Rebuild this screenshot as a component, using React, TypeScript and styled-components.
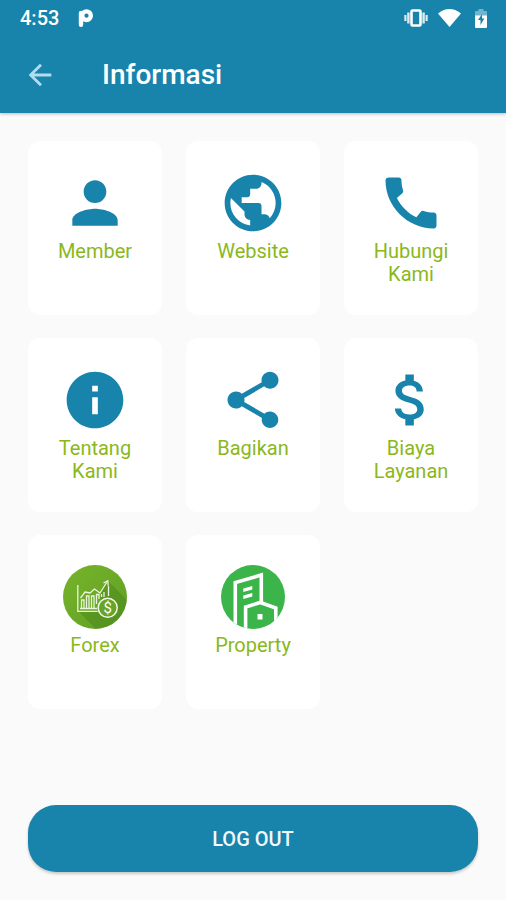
import React from "react";
import styled, { createGlobalStyle } from "styled-components";
import {
  MdArrowBack,
  MdAttachMoney,
  MdCall,
  MdInfo,
  MdPerson,
  MdShare,
} from "react-icons/md";

const blue = "#1883ab";
const lime = "#8ab81c";

const GlobalStyle = createGlobalStyle`
  *, *::before, *::after { box-sizing: border-box; }
  body {
    margin: 0;
    background: #fafafa;
    font-family: Roboto, "Noto Sans", sans-serif;
  }
`;

const Screen = styled.div`
  display: flex;
  flex-direction: column;
  min-height: 100vh;
`;

const Header = styled.header`
  background: ${blue};
  color: #fff;
  box-shadow: 0 1px 3px rgba(0, 0, 0, 0.25);
`;

const StatusBar = styled.div`
  display: flex;
  align-items: center;
  justify-content: space-between;
  height: 36px;
  padding: 0 19px 0 20px;
`;

const StatusGroup = styled.div<{ $gap: number }>`
  display: flex;
  align-items: center;
  gap: ${(p) => p.$gap}px;

  svg {
    display: block;
  }
`;

const Clock = styled.time`
  font-size: 20px;
  font-weight: 500;
  line-height: 24px;
`;

const Toolbar = styled.div`
  display: flex;
  align-items: center;
  gap: 45px;
  height: 77px;
  padding: 0 23px;
`;

const BackButton = styled.button`
  display: flex;
  padding: 0;
  border: 0;
  background: none;
  color: #b4dcf0;
  cursor: pointer;
`;

const Title = styled.h1`
  margin: 0;
  font-size: 28px;
  font-weight: 500;
  line-height: 32px;
`;

const Content = styled.main`
  display: flex;
  flex: 1;
  flex-direction: column;
  justify-content: space-between;
  gap: 28px;
  padding: 28px;
`;

const Menu = styled.nav`
  display: grid;
  grid-template-columns: repeat(3, 1fr);
  grid-auto-rows: minmax(174px, auto);
  gap: 23px 24px;
`;

const Tile = styled.a`
  display: flex;
  flex-direction: column;
  align-items: center;
  gap: 3px;
  padding: 28px 24px 24px;
  border-radius: 12px;
  background: #fff;
  color: ${blue};
  text-decoration: none;
`;

const TileLabel = styled.span`
  color: ${lime};
  font-size: 20px;
  line-height: 23px;
  text-align: center;
`;

const LogoutButton = styled.button`
  width: 100%;
  height: 67px;
  border: 0;
  border-radius: 28px;
  background: ${blue};
  color: #f0faff;
  box-shadow: 0 2px 3px rgba(0, 0, 0, 0.2);
  font: 500 20px/24px Roboto, "Noto Sans", sans-serif;
  cursor: pointer;
`;

const NotificationIcon = () => (
  <svg width="16" height="18" viewBox="0 0 16 18" aria-hidden="true">
    <circle cx="8.500" cy="6.700" r="4.300" fill="none" stroke="#fff" strokeWidth="4.400" />
    <path d="M3 4v11.700" stroke="#fff" strokeWidth="4.400" strokeLinecap="round" />
  </svg>
);

const VibrateIcon = () => (
  <svg width="24" height="18" viewBox="0 0 24 18" aria-hidden="true">
    <rect x="7.5" y="1.5" width="9" height="15" rx="1" fill="none" stroke="#fff" strokeWidth="2.6" />
    <path d="M4.4 3.5v11M19.6 3.5v11" stroke="#fff" strokeWidth="2.4" opacity="0.85" />
    <path d="M1.4 6v6M22.6 6v6" stroke="#fff" strokeWidth="2.2" opacity="0.85" />
  </svg>
);

const WifiIcon = () => (
  <svg width="23" height="18" viewBox="0 0 23 18" aria-hidden="true">
    <path d="M0 4.5Q11.5-4.3 23 4.5L11.5 18z" fill="#fff" />
  </svg>
);

const BatteryIcon = () => (
  <svg width="16" height="19" viewBox="-4 0 16 19" aria-hidden="true">
    <path d="M3.5 0h5v2H11a1 1 0 0 1 1 1v4H0V3a1 1 0 0 1 1-1h2.500z" fill="#fff" opacity="0.4" />
    <path d="M0 6.500h12V18a1 1 0 0 1-1 1H1a1 1 0 0 1-1-1z" fill="#fff" />
    <path d="M7 5l-4 6h2.500v5L9.300 9.500H7z" fill={blue} />
  </svg>
);

const GlobeIcon = () => (
  <svg width="68" height="68" viewBox="0 0 24 24" fill="currentColor" aria-hidden="true">
    <path d="M12 2C6.480 2 2 6.480 2 12s4.480 10 10 10 10-4.480 10-10S17.520 2 12 2zm-1 17.930c-3.950-.49-7-3.850-7-7.930 0-.62.080-1.210.210-1.790L9 15v1c0 1.100.9 2 2 2v1.930zm6.900-2.540c-.26-.81-1-1.390-1.900-1.390h-1v-3c0-.55-.45-1-1-1H8v-2h2c.55 0 1-.45 1-1V7h2c1.100 0 2-.9 2-2v-.41c2.930 1.190 5 4.060 5 7.410 0 2.080-.8 3.970-2.100 5.390z" />
  </svg>
);

const ForexIcon = () => (
  <svg width="68" height="68" viewBox="-2 -2 68 68" aria-hidden="true">
    <defs>
      <linearGradient id="forexFill" x1="0" y1="0" x2="1" y2="1">
        <stop offset="0" stopColor="#78b42b" />
        <stop offset="1" stopColor="#5f9e24" />
      </linearGradient>
      <clipPath id="forexClip">
        <circle cx="32" cy="32" r="32" />
      </clipPath>
    </defs>
    <g clipPath="url(#forexClip)">
      <rect width="64" height="64" fill="url(#forexFill)" />
      <path d="M45 16l24 24v30H39L15 46h22V28z" fill="#427f18" opacity="0.4" />
    </g>
    <g fill="none" stroke="#e9f4d8" strokeWidth="1.3">
      <path d="M14.800 20v26.300h20M17 43.500h17" />
      <path d="M17.500 33l4.500-6 5 1 4.500-4 5.500 4 7-11" strokeLinejoin="round" />
      <path d="M40.500 18l4.300-2.300.4 5" />
      <path d="M18.500 43V35h2.500v8M23.500 43V31h2.500v12M28.500 43V31h2.500v12M33.500 39V29.500h2.500V34M38.500 32v-3M41 32v-5M45.500 31V21" />
    </g>
    <circle cx="44.700" cy="42.700" r="9.500" fill="#68a427" stroke="#f1f8e6" strokeWidth="1.500" />
    <text
      x="44.700"
      y="48"
      fill="#fff"
      fontFamily="Roboto, sans-serif"
      fontSize="15"
      textAnchor="middle"
    >
      $
    </text>
  </svg>
);

const PropertyIcon = () => (
  <svg width="68" height="68" viewBox="-2 -2 68 68" aria-hidden="true">
    <defs>
      <clipPath id="propertyClip">
        <circle cx="32" cy="32" r="32" />
      </clipPath>
    </defs>
    <g clipPath="url(#propertyClip)">
      <rect width="64" height="64" fill="#3bb44a" />
      <g fill="none" stroke="#fff" strokeWidth="3.600">
        <path d="M14.300 66V17.500l26-7.500v28" />
        <path d="M24.600 66V42l14.700-4.500L54.800 43v14" />
      </g>
      <path d="M22.300 23.500l9-2.500v3.500l-9 2.500zM22.300 30.500l9-2.500v3.500l-9 2.500z" fill="#fff" />
      <rect x="36.500" y="49" width="5" height="5.500" fill="#fff" />
    </g>
  </svg>
);

const items = [
  { label: "Member", icon: <MdPerson size={68} /> },
  { label: "Website", icon: <GlobeIcon /> },
  { label: "Hubungi Kami", icon: <MdCall size={68} /> },
  { label: "Tentang Kami", icon: <MdInfo size={68} /> },
  { label: "Bagikan", icon: <MdShare size={68} /> },
  { label: "Biaya Layanan", icon: <MdAttachMoney size={68} /> },
  { label: "Forex", icon: <ForexIcon /> },
  { label: "Property", icon: <PropertyIcon /> },
];

export default function App() {
  return (
    <>
      <GlobalStyle />
      <Screen>
        <Header>
          <StatusBar>
            <StatusGroup $gap={19}>
              <Clock>4:53</Clock>
              <NotificationIcon />
            </StatusGroup>
            <StatusGroup $gap={10}>
              <VibrateIcon />
              <WifiIcon />
              <BatteryIcon />
            </StatusGroup>
          </StatusBar>
          <Toolbar>
            <BackButton type="button" aria-label="Kembali">
              <MdArrowBack size={34} />
            </BackButton>
            <Title>Informasi</Title>
          </Toolbar>
        </Header>
        <Content>
          <Menu aria-label="Informasi">
            {items.map(({ label, icon }) => (
              <Tile key={label} href="#">
                {icon}
                <TileLabel>{label}</TileLabel>
              </Tile>
            ))}
          </Menu>
          <LogoutButton type="button">LOG OUT</LogoutButton>
        </Content>
      </Screen>
    </>
  );
}
